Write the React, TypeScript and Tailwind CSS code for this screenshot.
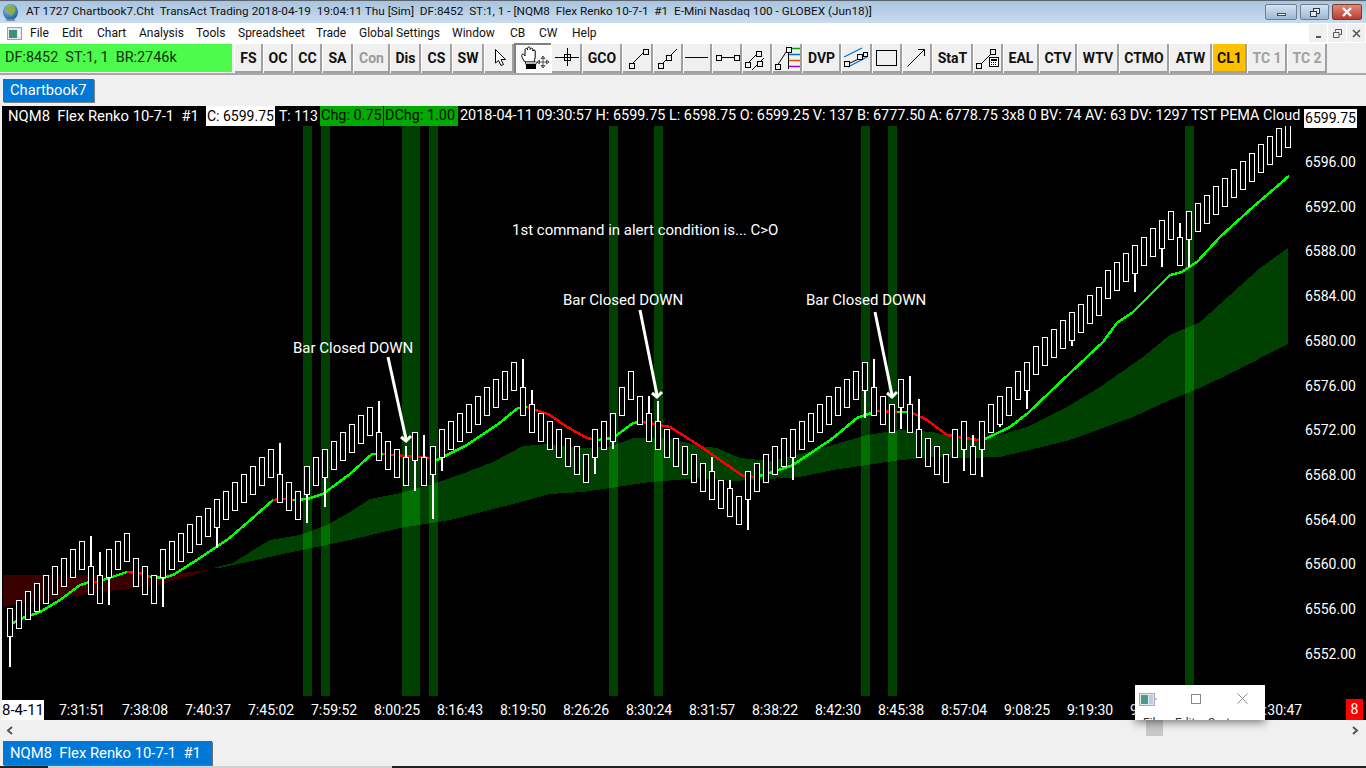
import React from "react";

const font = "font-['Roboto','Liberation_Sans',sans-serif]";

const candles: [number, number?][] = [
  [608, 667], [600], [591], [583], [575], [566], [558], [549], [541], [566, 536], [575, 552], [549, 605], [541], [533], [558], [566], [575], [549, 607], [541], [533], [524], [516], [508], [499, 548], [491], [482], [474], [466], [457], [449], [474, 443], [482], [491], [466, 523], [457], [449, 507], [441], [432], [424], [415], [407], [432, 401], [441], [449], [457, 446], [432, 491], [457, 435], [446, 519], [429, 471], [421], [413], [404], [396], [387], [379], [371], [362], [387, 359], [404, 390], [413], [421], [429], [438], [446], [454], [429, 474], [421], [413, 449], [387], [371], [396], [413, 396], [421, 401], [429], [438], [446], [454], [463], [471, 457], [480], [488, 480], [496], [471, 530], [463], [454], [446], [438], [429, 480], [421], [413], [404], [396], [387], [379], [371], [362, 418], [387, 359], [396], [404], [379, 429], [404, 376], [429, 399], [438], [446], [454], [429], [421, 471], [446, 435], [421, 477], [404], [396, 427], [387], [371], [362, 409], [346], [337], [329], [320], [312, 346], [304], [295], [287], [270], [262], [253], [245, 292], [237], [228], [220, 267], [211], [237, 223], [211, 267], [203], [195], [186], [178], [169], [161], [153], [144], [136], [128], [119],
];

const bands = [[303, 9], [321, 9], [402, 18], [429, 9], [609, 9], [654, 9], [861, 9], [888, 9], [1185, 9]];

const maSegments: [string, string][] = [
  ["#00ff00", "13,623 23,618 40,612 60,600 80,585 90,582"],
  ["#ff0000", "90,582 97,582"],
  ["#00ff00", "97,582 127,572"],
  ["#ff0000", "127,572 140,573 150,577"],
  ["#00ff00", "150,577 163,578 173,575 200,558 227,540 247,523 273,500"],
  ["#ff0000", "273,500 283,499 293,500"],
  ["#00ff00", "293,500 307,499 323,494 350,474 372,454 383,454"],
  ["#ff0000", "383,454 392,455 430,458"],
  ["#00ff00", "430,458 437,460 467,445 497,425 518,408 527,407"],
  ["#ff0000", "527,407 550,415 567,427 587,438 598,440"],
  ["#00ff00", "598,440 613,438 633,423 643,422"],
  ["#ff0000", "643,422 670,427 700,446 720,460 743,476 755,477"],
  ["#00ff00", "755,477 770,473 793,465 833,438 857,418 877,411"],
  ["#ff0000", "877,411 897,412"],
  ["#00ff00", "897,412 910,412"],
  ["#ff0000", "910,412 927,420 947,435 977,440 985,439"],
  ["#00ff00", "985,439 1010,427 1028,413 1070,373 1103,342 1117,323 1133,312 1170,275 1182,272 1197,262 1220,237 1253,207 1289,176"],
];

const redCloud = "3,575 43,575 100,575 110,574 160,575 200,571 213,569 187,577 160,585 110,591 67,597 33,602 3,607";

const cloudTop = "213,568 233,563 253,550 270,540 300,535 327,525 350,512 370,499 400,493 433,484 467,472 493,462 523,446 550,444 583,448 610,447 633,438 667,438 700,446 717,448 740,458 770,461 808,452 843,442 867,435 900,430 933,432 967,440 1000,435 1027,427 1067,407 1100,387 1143,357 1170,335 1200,322 1260,268 1288,248";
const cloudBottom = "1288,344 1233,372 1200,388 1170,400 1133,417 1070,440 1050,445 1000,457 967,458 933,457 900,460 867,465 833,470 800,477 767,479 733,481 700,478 650,482 617,487 583,492 550,494 517,503 450,520 400,528 350,540 283,554 220,568";

const annotations = [
  { x: 293, y: 353, t: "Bar Closed DOWN" },
  { x: 563, y: 305, t: "Bar Closed DOWN" },
  { x: 806, y: 305, t: "Bar Closed DOWN" },
  { x: 512, y: 235, t: "1st command in alert condition is... C>O" },
];

const arrows = [
  [388, 357, 406, 442],
  [640, 310, 657, 398],
  [875, 312, 892, 398],
];

const Sq = ({ x, y, s = 5 }: { x: number; y: number; s?: number }) => (
  <rect x={x + 0.5} y={y + 0.5} width={s} height={s} fill="#f0f0f0" stroke="#000" />
);

const iconBox = (children: React.ReactNode) => (
  <svg width="30" height="30" viewBox="0 0 30 30" shapeRendering="crispEdges">{children}</svg>
);

const CursorIcon = () => (
  <svg width="30" height="30" viewBox="0 0 30 30">
    <path d="M11.500 6.500v13.500l3-2.500 2.500 5 2.500-1-2.500-5h4.500z" fill="#fff" stroke="#000" strokeWidth="1" />
  </svg>
);
const HandIcon = () => (
  <svg width="37" height="30" viewBox="0 0 37 30">
    <g transform="translate(3 1)">
      <path d="M7 17c-1.500-3-3-5-2-6.500 1-1 2 0 3 1.500V6c0-2 2.500-2 2.500 0V4.500c0-2 2.700-2 2.700 0V5.500c0-1.800 2.600-1.800 2.600 0V7c0-1.500 2.400-1.500 2.400 0v6c0 2-1 3-1 5H9z" fill="#fff" stroke="#000" strokeWidth="1" />
      <rect x="9" y="20" width="10" height="5" fill="#000" />
      <rect x="8.500" y="18" width="11" height="2" fill="#fff" stroke="#000" strokeWidth=".6" />
    </g>
    <path d="M29 13v12M23 19h12M29 13l-2 2.500h4zM29 25l-2-2.500h4zM23 19l2.500-2v4zM35 19l-2.500-2v4z" fill="#fff" stroke="#333" strokeWidth=".8" />
  </svg>
);
const CrossIcon = () =>
  iconBox(
    <>
      <path d="M3 14.500h24M15.500 5v18" stroke="#000" />
      <rect x="12.500" y="11.500" width="6" height="6" fill="none" stroke="#000" />
    </>
  );
const Line1 = () => (
  <svg width="30" height="30" viewBox="0 0 30 30">
    <path d="M8 22 22 8" stroke="#000" />
    <Sq x={6} y={20} />
    <Sq x={20} y={6} />
  </svg>
);
const Line2 = () => (
  <svg width="30" height="30" viewBox="0 0 30 30">
    <path d="M8 22 24 6" stroke="#000" />
    <Sq x={5} y={20} />
    <Sq x={13} y={12} />
  </svg>
);
const HLine = () => iconBox(<path d="M2 14.500h24" stroke="#000" />);
const HLine2 = () =>
  iconBox(
    <>
      <path d="M6 14.500h18" stroke="#000" />
      <Sq x={4} y={12} />
      <Sq x={22} y={12} />
    </>
  );
const TwoSeg = () => (
  <svg width="30" height="30" viewBox="0 0 30 30">
    <path d="M5 21 16 10M10 27 22 15" stroke="#000" />
    <Sq x={3} y={19} />
    <Sq x={14} y={8} />
    <Sq x={15} y={18} />
  </svg>
);
const FibIcon = () => (
  <svg width="30" height="30" viewBox="0 0 30 30">
    <path d="M5 23 16 6M16.500 6v20" stroke="#000" />
    <path d="M17 5.500h11" stroke="#00a000" strokeWidth="1.500" />
    <path d="M17 11.500h11" stroke="#0070d0" strokeWidth="1.500" />
    <path d="M17 17.500h11" stroke="#e05000" strokeWidth="1.500" />
    <path d="M17 23.500h11" stroke="#a000c0" strokeWidth="1.500" />
    <Sq x={3} y={21} />
    <Sq x={14} y={4} />
  </svg>
);
const ChannelIcon = () => (
  <svg width="31" height="30" viewBox="0 0 31 30">
    <path d="M3 14 21 5M7 24 26 14" stroke="#0070d0" strokeWidth="1.300" />
    <path d="M7 21 26 12" stroke="#000" />
    <Sq x={3} y={18} />
    <Sq x={16} y={11} />
    <rect x="22.500" y="9.500" width="4" height="4" fill="#f0f0f0" stroke="#000" />
  </svg>
);
const RectIcon = () => iconBox(<rect x="4.500" y="7.500" width="20" height="15" fill="none" stroke="#000" />);
const ArrowIcon = () => (
  <svg width="30" height="30" viewBox="0 0 30 30">
    <path d="M5.500 23.500 22.500 6.500M16 6.500h6.500V13" fill="none" stroke="#000" />
  </svg>
);
const CalcIcon = () => (
  <svg width="30" height="30" viewBox="0 0 30 30">
    <path d="M6 23 20 9" stroke="#000" />
    <Sq x={3} y={20} />
    <Sq x={17} y={6} />
    <rect x="16.500" y="14.500" width="9" height="9" fill="#fff" stroke="#000" />
    <rect x="18" y="16" width="6" height="2" fill="#000" />
    <path d="M18 19.500h6M18 21.500h6" stroke="#000" strokeDasharray="1 1" />
  </svg>
);

type Btn = { w: string; label?: string; icon?: React.ReactNode; color?: string; bg?: string; pressed?: boolean };

const buttons: Btn[] = [
  { w: "w-[29px]", label: "FS" },
  { w: "w-[30px]", label: "OC" },
  { w: "w-[29px]", label: "CC" },
  { w: "w-[31px]", label: "SA" },
  { w: "w-[37px]", label: "Con", color: "text-[#9a9a9a]" },
  { w: "w-[31px]", label: "Dis" },
  { w: "w-[31px]", label: "CS" },
  { w: "w-[32px]", label: "SW" },
  { w: "w-[30px]", icon: <CursorIcon /> },
  { w: "w-[37px]", icon: <HandIcon />, pressed: true },
  { w: "w-[31px]", icon: <CrossIcon /> },
  { w: "w-[40px]", label: "GCO" },
  { w: "w-[31px]", icon: <Line1 /> },
  { w: "w-[30px]", icon: <Line2 /> },
  { w: "w-[29px]", icon: <HLine /> },
  { w: "w-[30px]", icon: <HLine2 /> },
  { w: "w-[30px]", icon: <TwoSeg /> },
  { w: "w-[30px]", icon: <FibIcon /> },
  { w: "w-[39px]", label: "DVP" },
  { w: "w-[31px]", icon: <ChannelIcon /> },
  { w: "w-[30px]", icon: <RectIcon /> },
  { w: "w-[30px]", icon: <ArrowIcon /> },
  { w: "w-[41px]", label: "StaT" },
  { w: "w-[30px]", icon: <CalcIcon /> },
  { w: "w-[36px]", label: "EAL" },
  { w: "w-[38px]", label: "CTV" },
  { w: "w-[42px]", label: "WTV" },
  { w: "w-[50px]", label: "CTMO" },
  { w: "w-[43px]", label: "ATW" },
  { w: "w-[35px]", label: "CL1", bg: "bg-[#ffc000]" },
  { w: "w-[40px]", label: "TC 1", color: "text-[#a0a0a0]" },
  { w: "w-[40px]", label: "TC 2", color: "text-[#a0a0a0]" },
];

const menu: [string, string][] = [
  ["File", "w-[32px]"],
  ["Edit", "w-[35px]"],
  ["Chart", "w-[42px]"],
  ["Analysis", "w-[57px]"],
  ["Tools", "w-[42px]"],
  ["Spreadsheet", "w-[78px]"],
  ["Trade", "w-[43px]"],
  ["Global Settings", "w-[93px]"],
  ["Window", "w-[58px]"],
  ["CB", "w-[29px]"],
  ["CW", "w-[33px]"],
  ["Help", "w-[40px]"],
];

const prices = ["6596.00", "6592.00", "6588.00", "6584.00", "6580.00", "6576.00", "6572.00", "6568.00", "6564.00", "6560.00", "6556.00", "6552.00"];
const times = ["7:31:51", "7:38:08", "7:40:37", "7:45:02", "7:59:52", "8:00:25", "8:16:43", "8:19:50", "8:26:26", "8:30:24", "8:31:57", "8:38:22", "8:42:30", "8:45:38", "8:57:04", "9:08:25", "9:19:30", "9:24:11", "9:27:52", "9:30:47"];

const Chart = () => (
  <svg width="1302" height="574" viewBox="2 126 1302 574" className="block">
    <polygon points={redCloud} fill="#3a0000" shapeRendering="crispEdges" />
    <polygon points={`${cloudTop} ${cloudBottom}`} fill="#00ff00" fillOpacity="0.25" shapeRendering="crispEdges" />
    {bands.map(([x, w]) => (
      <rect key={x} x={x} y={126} width={w} height={570} fill="#00ff00" fillOpacity="0.25" />
    ))}
    {maSegments.map(([c, p], i) => (
      <polyline key={i} points={p} fill="none" stroke={c} strokeWidth="2.500" strokeLinejoin="round" shapeRendering="crispEdges" />
    ))}
    <g shapeRendering="crispEdges">
      {candles.map(([top, wick], i) => {
        const x = 10 + 9 * i;
        return (
          <g key={i}>
            {wick !== undefined && (
              <rect x={x - 1} y={wick < top ? wick : top + 28} width={2} height={wick < top ? top - wick : wick - top - 28} fill="#fff" />
            )}
            <rect x={x - 2.5} y={top + 0.5} width={5} height={28} fill="#000" stroke="#fff" strokeWidth="1" />
          </g>
        );
      })}
    </g>
    {arrows.map(([x1, y1, x2, y2]) => (
      <g key={x1} stroke="#fff" fill="none" strokeWidth="3">
        <line x1={x1} y1={y1} x2={x2} y2={y2 - 3} />
        <path d={`M${x2 - 5} ${y2 - 5}L${x2} ${y2 - 1}L${x2 + 5} ${y2 - 6}`} strokeWidth="3" />
      </g>
    ))}
    {annotations.map((a) => (
      <text key={a.x} x={a.x} y={a.y} fill="#fff" fontSize="15" fontFamily="Roboto, sans-serif">
        {a.t}
      </text>
    ))}
  </svg>
);

export default function App() {
  return (
    <div className={`${font} w-[1366px] h-[768px] overflow-hidden flex flex-col bg-[#f0f0f0] text-black`}>
      {/* Title bar */}
      <div className="h-[23px] shrink-0 relative flex items-center border-t border-[#5a6470] bg-linear-to-b from-[#a9c4de] to-[#c9dcef]">
        <svg width="17" height="18" viewBox="0 0 17 18" className="ml-[2px] mr-[7px]">
          <defs>
            <radialGradient id="g" cx="40%" cy="30%" r="70%">
              <stop offset="0" stopColor="#9fd0f0" />
              <stop offset="1" stopColor="#1c5fa0" />
            </radialGradient>
          </defs>
          <ellipse cx="8.500" cy="9" rx="7.500" ry="8" fill="url(#g)" />
          <path d="M5 3c3-2 7-1 8 2 1 3-1 4-3 7-1 1-3 0-3-2S3 8 3 6z" fill="#8fb03a" />
          <ellipse cx="8.500" cy="17" rx="5" ry="1" fill="#7a8a9a" />
        </svg>
        <span className="text-[11.75px] whitespace-pre text-[#111]">
          {"AT 1727 Chartbook7.Cht  TransAct Trading 2018-04-19  19:04:11 Thu [Sim]  DF:8452  ST:1, 1 - [NQM8  Flex Renko 10-7-1  #1  E-Mini Nasdaq 100 - GLOBEX (Jun18)]"}
        </span>
        <div className="ml-auto mr-[4px] flex gap-[3px]">
          <div className="w-[32px] h-[16px] rounded-[2px] border border-[#6b7f95] bg-linear-to-b from-[#d4e3f2] to-[#9db8d4] flex items-center justify-center">
            <div className="w-[9px] h-[3px] mt-[5px] bg-white border border-[#3c4a5a]" />
          </div>
          <div className="w-[29px] h-[16px] rounded-[2px] border border-[#6b7f95] bg-linear-to-b from-[#d4e3f2] to-[#9db8d4] flex items-center justify-center">
            <div className="relative w-[10px] h-[9px]">
              <div className="absolute right-0 top-0 w-[7px] h-[6px] border border-[#2c3a4a] bg-[#dfeaf5]" />
              <div className="absolute left-0 bottom-0 w-[7px] h-[6px] border border-[#2c3a4a] bg-[#dfeaf5]" />
            </div>
          </div>
          <div className="w-[30px] h-[16px] rounded-[2px] border border-[#7b3a30] bg-linear-to-b from-[#e0897a] to-[#b83c2c] flex items-center justify-center">
            <svg width="12" height="10" viewBox="0 0 12 10">
              <path d="M2 1l8 8M10 1l-8 8" stroke="#fff" strokeWidth="2.200" />
            </svg>
          </div>
        </div>
      </div>

      {/* Menu bar */}
      <div className="h-[20px] shrink-0 bg-white flex items-center relative text-[12px] text-[#111]">
        <svg width="15" height="13" viewBox="0 0 15 13" className="ml-[7px] mr-[8px]">
          <rect x=".5" y=".5" width="14" height="12" fill="#e8e8e8" stroke="#9aa0a8" />
          <rect x="2" y="3" width="8" height="8" fill="#3f8f7f" />
          <rect x="11" y="3" width="2" height="6" fill="#fff" />
        </svg>
        {menu.map(([m, w]) => (
          <span key={m} className={`${w} whitespace-pre`}>
            {m}
          </span>
        ))}
        <div className="absolute right-[1px] top-[1px] flex gap-[1px] text-[#555]">
          <div className="w-[18px] h-[18px] bg-[#f0f0f0] flex items-center justify-center">
            <div className="w-[5px] h-[2px] bg-[#555] mt-[8px]" />
          </div>
          <div className="w-[18px] h-[18px] bg-[#f0f0f0] flex items-center justify-center">
            <svg width="9" height="9" viewBox="0 0 9 9"><path d="M2.500 2.500v-2h6v5h-2M.5 3.500h5.500v5h-5.500z" fill="none" stroke="#555" /></svg>
          </div>
          <div className="w-[18px] h-[18px] bg-[#f0f0f0] flex items-center justify-center">
            <svg width="9" height="9" viewBox="0 0 9 9"><path d="M1 1l7 7M8 1l-7 7" stroke="#555" strokeWidth="1.600" /></svg>
          </div>
        </div>
      </div>

      {/* Toolbar */}
      <div className="h-[30px] shrink-0 flex items-stretch bg-[#f0f0f0]">
        <div className="w-[232px] mr-[2px] mt-[1px] mb-[1px] bg-[#4dfb4d] flex items-center pl-[5px] text-[14.4px] whitespace-pre text-[#0a300a]">
          {"DF:8452  ST:1, 1  BR:2746k"}
        </div>
        {buttons.map((b, i) => (
          <div
            key={i}
            className={`${b.w} ${b.bg ?? (b.pressed ? "bg-[#fafafa]" : "bg-[#f0f0f0]")} ${b.color ?? "text-[#111]"} h-[30px] shrink-0 flex items-center justify-center overflow-hidden text-[14px] font-bold whitespace-pre ${
              b.pressed
                ? "shadow-[inset_2px_2px_0_#808080,inset_-1px_-1px_0_#ffffff]"
                : "shadow-[inset_1px_1px_0_#ffffff,inset_-2px_-2px_0_#a0a0a0]"
            }`}
          >
            {b.label ?? b.icon}
          </div>
        ))}
      </div>

      {/* Tab strip */}
      <div className="h-[33px] shrink-0 border-t-2 border-[#a8a8a8] bg-[#f0f0f0] pt-[4px] pl-[3px]">
        <div className="w-[91px] h-[23px] bg-[#0078d7] text-white text-[14.700px] flex items-center pl-[7px] shadow-[1px_1px_0_#808080]">Chartbook7</div>
      </div>

      {/* Chart */}
      <div className="h-[614px] shrink-0 bg-black ml-[2px] flex flex-col text-white text-[14px]">
        <div className="h-[20px] shrink-0 flex items-center whitespace-pre relative text-[14.430px]">
          <span className="ml-[6px] w-[198px] text-[14.800px]">{"NQM8  Flex Renko 10-7-1  #1"}</span>
          <span className="w-[69px] h-full bg-white text-black flex items-center pl-[1px] text-[14px]">C: 6599.75</span>
          <span className="ml-[4px] w-[41px] text-[14px]">T: 113</span>
          <span className="w-[63px] h-full bg-[#00aa00] text-[#000800] flex items-center pl-[1px]">Chg: 0.75</span>
          <span className="ml-[1px] w-[74px] h-full bg-[#00aa00] text-[#000800] flex items-center pl-[1px]">DChg: 1.00</span>
          <span className="ml-[2px]">2018-04-11 09:30:57 H: 6599.75 L: 6598.75 O: 6599.25 V: 137 B: 6777.50 A: 6778.75 3x8 0 BV: 74 AV: 63 DV: 1297 TST PEMA Cloud</span>
          <span className="absolute left-[1302px] top-[3px] w-[53px] h-[19px] bg-white text-black flex items-center justify-center text-[14px]">6599.75</span>
        </div>
        <div className="h-[574px] shrink-0 flex">
          <Chart />
          <div className="flex-1 flex flex-col justify-between pt-[28px] pb-[37px] pl-[1px]">
            {prices.map((p) => (
              <div key={p} className="h-[17px] leading-[17px]">{p}</div>
            ))}
          </div>
        </div>
        <div className="h-[20px] shrink-0 flex items-center relative">
          <div className="w-[42px] h-full bg-white text-black flex items-center justify-end overflow-hidden whitespace-pre text-[15px]">2018-4-11</div>
          <div className="flex ml-[15px]">
            {times.map((t) => (
              <span key={t} className="w-[63px] shrink-0">{t}</span>
            ))}
          </div>
          <div className="absolute left-[1344px] top-[-1px] w-[17px] h-[21px] bg-[#ff0000] flex items-center justify-center">8</div>
        </div>
      </div>

      {/* Scroll + bottom tab */}
      <div className="flex-1 relative bg-[#f0f0f0]">
        <div className="h-[21px] flex items-center justify-between pl-[6px] pr-[7px] relative">
          <svg width="7" height="9" viewBox="0 0 7 9"><path d="M6 1L2 4.500l4 3.500" fill="none" stroke="#555" strokeWidth="2" /></svg>
          <svg width="7" height="9" viewBox="0 0 7 9"><path d="M1 1l4 3.500L1 8" fill="none" stroke="#555" strokeWidth="2" /></svg>
          <div className="absolute left-[1146px] top-0 w-[17px] h-[16px] bg-[#c8c8c8]" />
        </div>
        <div className="ml-[3px] w-[209px] h-[24px] bg-[#0078d7] text-white text-[14.800px] flex items-center pl-[7px] whitespace-pre shadow-[1px_1px_0_#707070]">
          {"NQM8  Flex Renko 10-7-1  #1"}
        </div>
        <div className="absolute left-0 right-0 bottom-0 h-[2px] flex">
          <div className="w-[48px] bg-[#202020]" />
          <div className="w-[344px] bg-[#d0d0d0]" />
          <div className="flex-1 bg-[#202020]" />
        </div>
      </div>

      {/* Floating window */}
      <div className="absolute left-[1135px] top-[685px] w-[130px] h-[35px] bg-white overflow-hidden shadow-[0_3px_8px_rgba(0,0,0,0.45)] z-10">
        <div className="relative h-full text-[12px] text-[#333]">
          <svg width="18" height="13" viewBox="0 0 18 13" className="absolute left-[4px] top-[8px]">
            <rect x=".5" y=".5" width="15" height="12" fill="#e4e8ec" stroke="#aab" />
            <rect x="2" y="2" width="7" height="9" fill="#4a9a88" />
            <rect x="10" y="2" width="4" height="9" fill="#bcd" />
            <path d="M15 6h3" stroke="#999" />
          </svg>
          <div className="absolute left-[56px] top-[9px] w-[10px] h-[10px] border border-[#888]" />
          <svg width="11" height="11" viewBox="0 0 11 11" className="absolute left-[102px] top-[8px]">
            <path d="M.5.5l10 10M10.500.5l-10 10" stroke="#888" />
          </svg>
          <span className="absolute left-[8px] top-[29px]">File</span>
          <span className="absolute left-[40px] top-[29px]">Edit</span>
          <span className="absolute left-[73px] top-[29px]">Sort</span>
        </div>
      </div>
    </div>
  );
}
